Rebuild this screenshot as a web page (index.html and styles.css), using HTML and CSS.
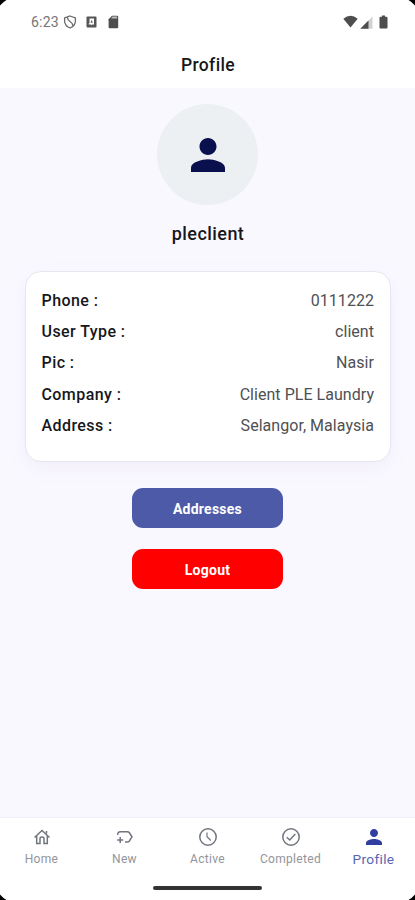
FILE: index.html
```html
<!DOCTYPE html>
<html lang="en">
<head>
<meta charset="utf-8">
<title>Profile</title>
<link rel="stylesheet" href="styles.css">
</head>
<body>
<div class="screen">
  <div class="status">
    <span class="time">6:23</span>
    <svg class="shield" width="14" height="14" viewBox="0 0 14 14" fill="none" stroke="#6a6a6a" stroke-width="1.300"><path d="M7 1 12.400 3V6C12.400 9.400 10 11.800 7 13 4 11.800 1.600 9.400 1.600 6V3ZM4.500 2.500Q4.500 5 7 6.500T10 10.500"/></svg>
    <svg class="app" width="11" height="12" viewBox="0 0 11 12"><rect x="0.5" y="0.5" width="10" height="11" rx="1" fill="#555"/><path d="M3.500 2.500h4.500v6H6.500L5.500 9.500V8.500H2.800V7.200H3.500Z" fill="#fff"/><path d="M5.700 3.800 6.800 6.800H4.600Z" fill="#555"/></svg>
    <svg class="sd" width="11" height="14" viewBox="0 0 11 14"><path d="M4 .8h5.200q1 0 1 1v10.400q0 1-1 1H1.600q-1 0-1-1V4.200Z" fill="#4d4d4d"/><path d="M4.500 1.500h4.700v2H3Z" fill="#bbb"/></svg>
    <span class="spacer"></span>
    <svg class="wifi" width="15" height="13" viewBox="0 0 15 13"><path d="M.3 3.700Q7.500-2.300 14.700 3.700L7.500 12.500Z" fill="#4d4d4d"/></svg>
    <svg class="signal" width="13" height="13" viewBox="0 0 13 13"><path d="M.3 12.700 12.500.5V12.700Z" fill="#d2d2d2"/><path d="M.3 12.700 8.500 4.500V12.700Z" fill="#4d4d4d"/></svg>
    <svg class="battery" width="9" height="14" viewBox="0 0 9 14"><path d="M3 .5h3v1.300h1.500q1 0 1 1v9.700q0 1-1 1h-6q-1 0-1-1V2.800q0-1 1-1H3Z" fill="#4d4d4d"/></svg>
  </div>
  <header class="header"><h1>Profile</h1></header>
  <main class="content">
    <div class="avatar"><svg width="34" height="34" viewBox="4 4 16 16"><path fill="#09104d" d="M12 12c2.210 0 4-1.790 4-4s-1.790-4-4-4-4 1.790-4 4 1.790 4 4 4zm0 2c-2.670 0-8 1.340-8 4v2h16v-2c0-2.660-5.330-4-8-4z"/></svg></div>
    <h2 class="name">pleclient</h2>
    <dl class="card">
      <div class="row"><dt>Phone :</dt><dd>0111222</dd></div>
      <div class="row"><dt>User Type :</dt><dd>client</dd></div>
      <div class="row"><dt>Pic :</dt><dd>Nasir</dd></div>
      <div class="row"><dt>Company :</dt><dd>Client PLE Laundry</dd></div>
      <div class="row"><dt>Address :</dt><dd>Selangor, Malaysia</dd></div>
    </dl>
    <button class="btn">Addresses</button>
    <button class="btn logout">Logout</button>
  </main>
  <nav class="tabs">
    <a class="tab"><svg width="20" height="20" viewBox="0 0 20 20" fill="none" stroke="#70757e" stroke-width="1.500"><path d="M2.500 10.500 10 3.500 17.500 10.500M4.700 9V16.500H8V11.500Q8 10 10 10T12 11.500V16.500H15.300V9M14.500 6.500V4"/></svg><span>Home</span></a>
    <a class="tab"><svg width="20" height="20" viewBox="0 0 20 20" fill="none" stroke="#70757e" stroke-width="1.500"><path d="M2.700 8Q2.500 4.700 5.500 4.700H12.500Q13.500 4.700 14.200 5.500L17 9.800 14.200 14.200Q13.500 15 12.500 15H10M5.200 10V16M2.200 13H8.200"/></svg><span>New</span></a>
    <a class="tab"><svg width="20" height="20" viewBox="0 0 20 20" fill="none" stroke="#70757e" stroke-width="1.500"><circle cx="10" cy="10" r="8.200"/><path d="M9 5.500V9.800L12.800 13.500" stroke-width="1.200"/></svg><span>Active</span></a>
    <a class="tab"><svg width="20" height="20" viewBox="0 0 20 20" fill="none" stroke="#70757e" stroke-width="1.500"><circle cx="10" cy="10" r="8.200"/><path d="M5.800 10.200 8.700 13 14.300 7"/></svg><span>Completed</span></a>
    <a class="tab active"><svg width="20" height="20" viewBox="2 2 20 20"><path fill="#303f9f" d="M12 12c2.210 0 4-1.790 4-4s-1.790-4-4-4-4 1.790-4 4 1.790 4 4 4zm0 2c-2.670 0-8 1.340-8 4v2h16v-2c0-2.660-5.330-4-8-4z"/></svg><span>Profile</span></a>
  </nav>
  <div class="gesture"><i></i></div>
  <svg class="corner tl" width="7" height="6" viewBox="0 0 7 6"><path d="M0 0H6.500Q3 2 0 5.500Z"/></svg>
  <svg class="corner tr" width="7" height="6" viewBox="0 0 7 6"><path d="M0 0H6.500Q3 2 0 5.500Z"/></svg>
  <svg class="corner bl" width="7" height="6" viewBox="0 0 7 6"><path d="M0 0H6.500Q3 2 0 5.500Z"/></svg>
  <svg class="corner br" width="7" height="6" viewBox="0 0 7 6"><path d="M0 0H6.500Q3 2 0 5.500Z"/></svg>
</div>
</body>
</html>
```
FILE: styles.css
```css
* { box-sizing: border-box; margin: 0; padding: 0; }
body { font-family: Roboto, "Liberation Sans", sans-serif; background: #fff; color: #17171a; }
.screen { position: relative; width: 415px; height: 900px; display: flex; flex-direction: column; overflow: hidden; background: #fff; }
.status { height: 43px; display: flex; align-items: center; padding: 0 27px 0 31px; flex: none; }
.time { font-size: 14px; letter-spacing: .2px; color: #757575; width: 32px; }
.app { margin-left: 9px; }
.sd { margin-left: 11px; }
.spacer { flex: 1; }
.signal { margin: 1px 6px 0 2px; }
.header { height: 45px; flex: none; text-align: center; }
.header h1 { font-size: 17.500px; line-height: 20px; font-weight: 500; letter-spacing: .35px; padding: 12px 0 0 1px; }
.content { flex: 1; background: #faf8ff; display: flex; flex-direction: column; align-items: center; padding-top: 16px; }
.avatar { width: 101px; height: 101px; border-radius: 50%; background: #ecf0f3; display: flex; align-items: center; justify-content: center; flex: none; }
.name { font-size: 18px; line-height: 22px; font-weight: 500; letter-spacing: .45px; margin-top: 18px; padding-left: 1px; }
.card { width: 366px; height: 191px; margin-top: 26px; border: 1px solid #e7e5ef; border-radius: 16px; background: #fff; padding: 13px 15.500px 0 16px; box-shadow: 0 6px 20px rgba(80, 60, 160, .06); flex: none; }
.row { display: flex; justify-content: space-between; height: 31.200px; line-height: 31.200px; font-size: 16px; }
.row dt { font-weight: 500; letter-spacing: .42px; }
.row dd { color: #505053; font-weight: 400; letter-spacing: .04px; }
.btn { width: 151px; height: 40px; border: 0; border-radius: 11px; margin-top: 26px; background: #4d5aa8; color: #fff; font: 700 14px/20px Roboto, "Liberation Sans", sans-serif; letter-spacing: .25px; padding-top: 1px; flex: none; }
.btn.logout { background: #f00; margin-top: 21px; }
.tabs { height: 62px; border-top: 1px solid #f1f0f5; display: flex; padding-top: 9px; flex: none; }
.tab { width: 83px; display: flex; flex-direction: column; align-items: center; color: #92959b; font-size: 12px; line-height: 14px; gap: 5px; letter-spacing: .33px; }
.tab.active { color: #5865b4; font-size: 13.700px; }
.gesture { height: 21px; flex: none; display: flex; justify-content: center; padding-top: 7px; }
.gesture i { width: 109px; height: 4px; border-radius: 2px; background: #333; }
.corner { position: absolute; }
.tl { left: 0; top: 0; }
.tr { right: 0; top: 0; transform: scaleX(-1); }
.bl { left: 0; bottom: 0; transform: scaleY(-1); }
.br { right: 0; bottom: 0; transform: scale(-1); }
```
